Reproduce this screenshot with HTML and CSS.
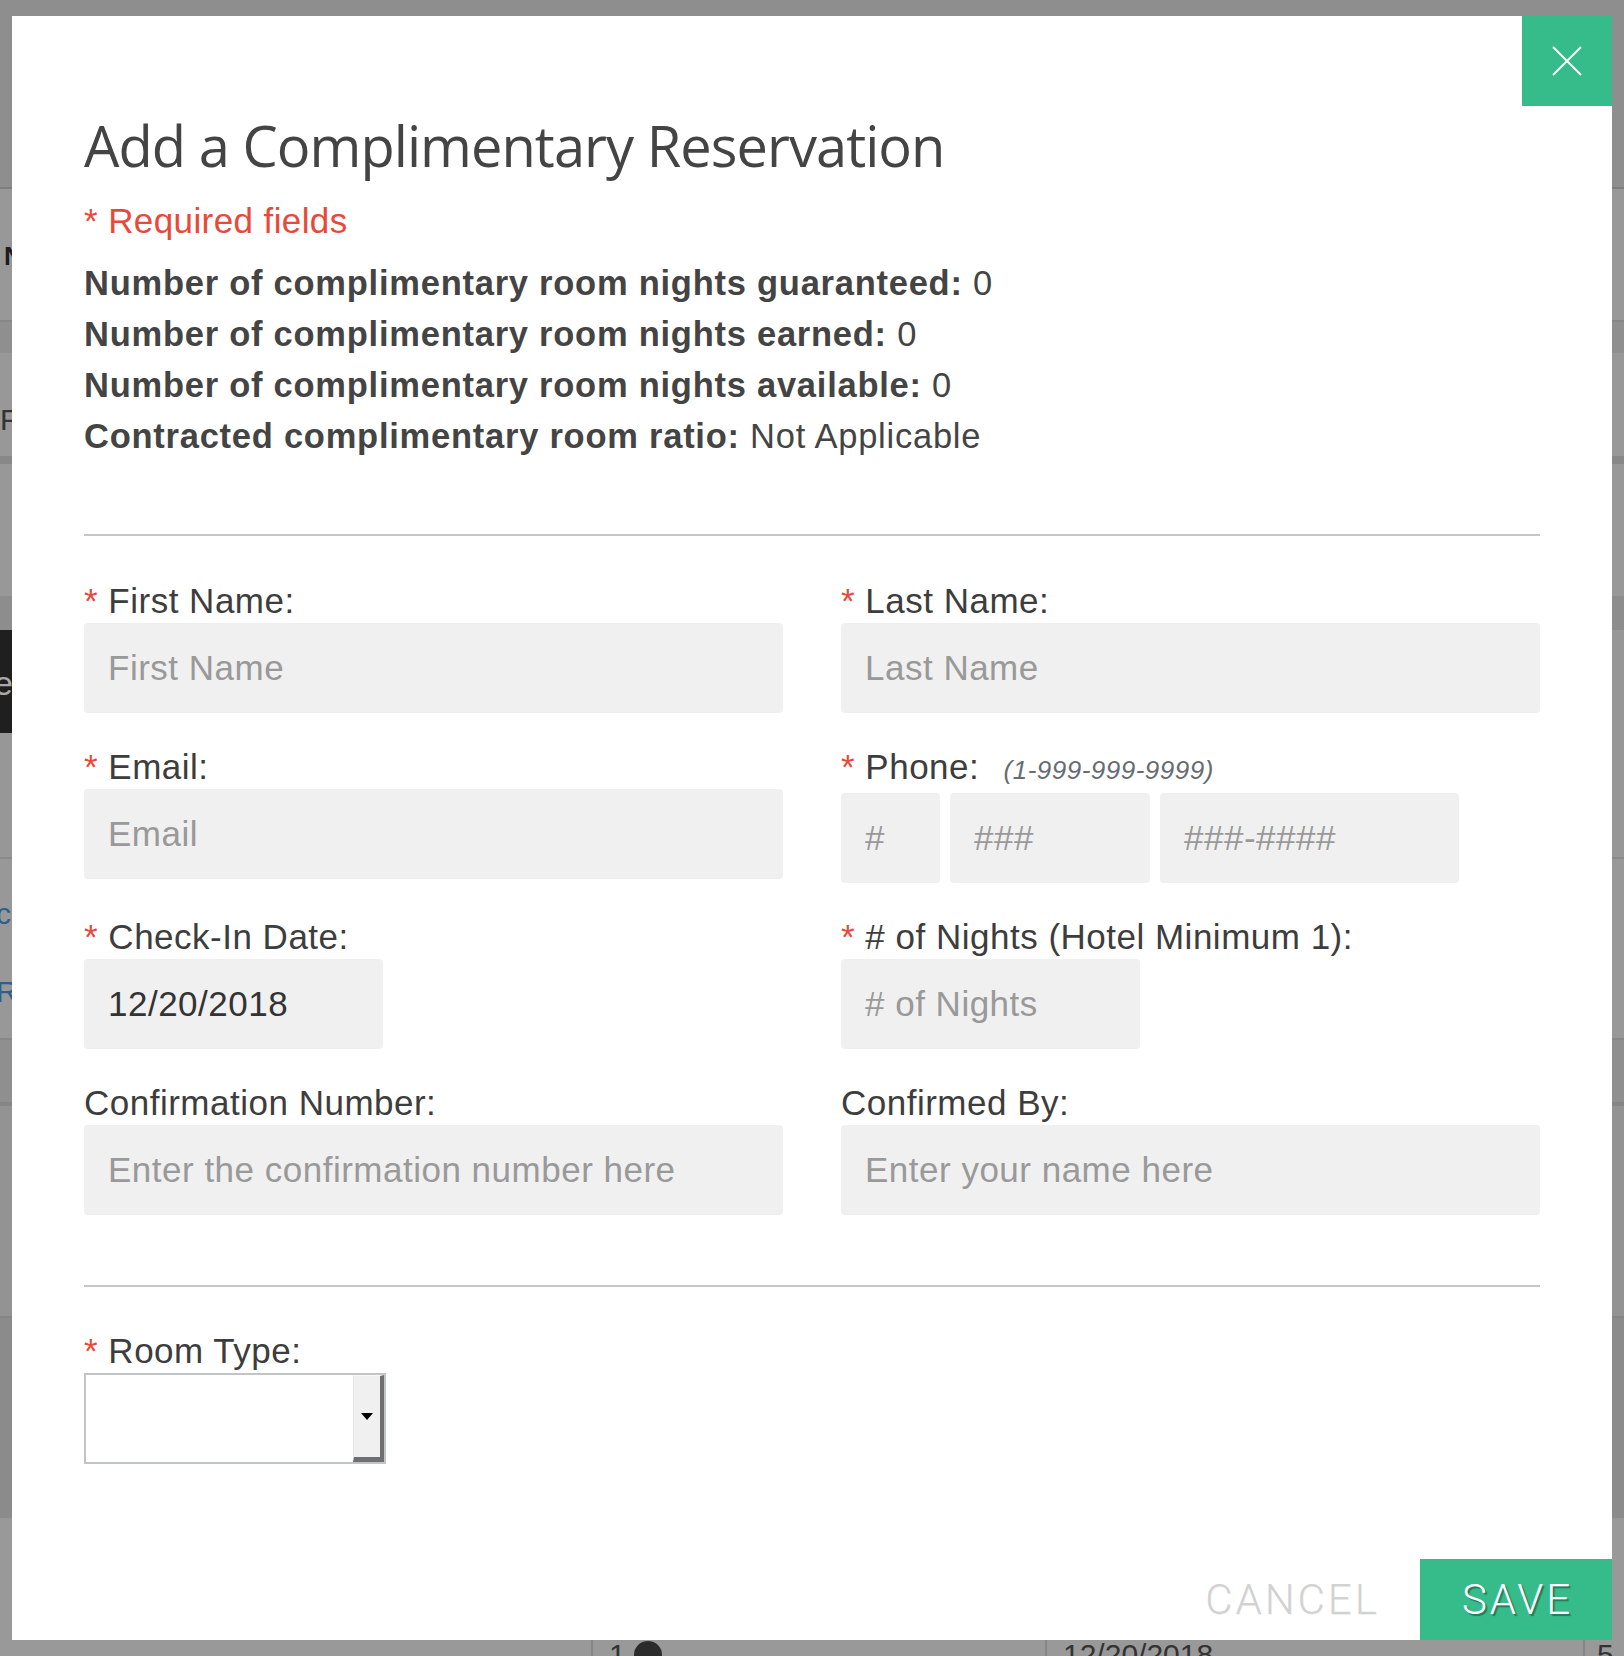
FILE: index.html
```html
<!DOCTYPE html>
<html lang="en">
<head>
  <meta charset="UTF-8">
  <meta name="viewport" content="width=device-width, initial-scale=1.0">
  <title>Add a Complimentary Reservation</title>
  <link rel="stylesheet" href="styles.css">
</head>
<body>
  <div class="backdrop">
    <div class="bk bk-head"></div>
    <div class="bk bk-r1"><span class="bk-bold">N</span></div>
    <div class="bk bk-r2"></div>
    <div class="bk bk-r3"><span class="bk-text">P</span></div>
    <div class="bk bk-r4"></div>
    <div class="bk bk-r5"></div>
    <div class="bk bk-r6"></div>
    <div class="bk bk-r7"><div class="bk-dark"><span class="bk-light">e</span></div></div>
    <div class="bk bk-r8"></div>
    <div class="bk bk-r9">
      <div class="bk-link">c</div>
      <div class="bk-link">R</div>
    </div>
    <div class="bk bk-r10"></div>
    <div class="bk bk-r11"></div>
    <div class="bk bk-r12"></div>
    <div class="bk bk-r13">
      <div class="bk-table">
        <div class="bk-cell bk-c1"></div>
        <div class="bk-cell bk-c2">1 <span class="bk-lock"></span></div>
        <div class="bk-cell bk-c3">12/20/2018</div>
        <div class="bk-cell bk-c4">5</div>
      </div>
    </div>
  </div>

  <div class="modal">
    <button class="close" aria-label="Close">
      <svg width="30" height="30" viewBox="0 0 30 30">
        <path d="M1 1 L29 29 M29 1 L1 29" stroke="#fff" stroke-width="1.8" fill="none"/>
      </svg>
    </button>

    <div class="modal-body">
      <h1 class="title">Add a Complimentary Reservation</h1>
      <p class="required"><span class="star">*</span> Required fields</p>

      <div class="stats">
        <div><b>Number of complimentary room nights guaranteed:</b> 0</div>
        <div><b>Number of complimentary room nights earned:</b> 0</div>
        <div><b>Number of complimentary room nights available:</b> 0</div>
        <div><b>Contracted complimentary room ratio:</b> Not Applicable</div>
      </div>

      <hr class="divider divider-top">

      <div class="form-grid">
        <div class="field">
          <label class="label"><span class="star">*</span> First Name:</label>
          <input class="input" type="text" placeholder="First Name">
        </div>
        <div class="field">
          <label class="label"><span class="star">*</span> Last Name:</label>
          <input class="input" type="text" placeholder="Last Name">
        </div>
        <div class="field">
          <label class="label"><span class="star">*</span> Email:</label>
          <input class="input" type="text" placeholder="Email">
        </div>
        <div class="field">
          <label class="label"><span class="star">*</span> Phone: <span class="hint">(1-999-999-9999)</span></label>
          <div class="phone-row">
            <input class="input phone-1" type="text" placeholder="#">
            <input class="input phone-2" type="text" placeholder="###">
            <input class="input phone-3" type="text" placeholder="###-####">
          </div>
        </div>
        <div class="field">
          <label class="label"><span class="star">*</span> Check-In Date:</label>
          <input class="input short filled" type="text" value="12/20/2018">
        </div>
        <div class="field">
          <label class="label"><span class="star">*</span> # of Nights (Hotel Minimum 1):</label>
          <input class="input short" type="text" placeholder="# of Nights">
        </div>
        <div class="field">
          <label class="label">Confirmation Number:</label>
          <input class="input" type="text" placeholder="Enter the confirmation number here">
        </div>
        <div class="field">
          <label class="label">Confirmed By:</label>
          <input class="input" type="text" placeholder="Enter your name here">
        </div>
      </div>

      <hr class="divider divider-bottom">

      <div class="field room-field">
        <label class="label"><span class="star">*</span> Room Type:</label>
        <div class="select">
          <span class="select-btn"><span class="caret"></span></span>
        </div>
      </div>
    </div>

    <div class="modal-footer">
      <button class="cancel">CANCEL</button>
      <button class="save">SAVE</button>
    </div>
  </div>
</body>
</html>
```

FILE: styles.css
```css
body{
  margin: 0;
  background-color: #8f8f8f;
  font-family: "Liberation Sans", Arial, Helvetica, sans-serif;
  color: #3d3d3d;
}

/* page behind the overlay */
.backdrop{
  position: fixed;
  top: 0;
  left: 0;
  right: 0;
  bottom: 0;
  overflow: hidden;
}
.bk{
  box-sizing: border-box;
  overflow: hidden;
}
.bk-head{
  height: 189px;
  background-color: #8e8e8e;
  border-bottom: 2px solid #7e7e7e;
}
.bk-r1{
  height: 133px;
  padding: 52px 0 0 4px;
  background-color: #989898;
  border-bottom: 2px solid #878787;
}
.bk-r2{
  height: 31px;
  background-color: #8f8f8f;
}
.bk-r3{
  height: 103px;
  padding: 52px 0 0 0;
  background-color: #989898;
}
.bk-r4{
  height: 8px;
  background-color: #888;
}
.bk-r5{
  height: 132px;
  background-color: #989898;
}
.bk-r6{
  height: 34px;
  background-color: #8d8d8d;
}
.bk-r7{
  height: 103px;
  background-color: #979797;
}
.bk-dark{
  width: 420px;
  height: 100%;
  padding-top: 34px;
  box-sizing: border-box;
  background-color: #1f1f1f;
}
.bk-r8{
  height: 126px;
  background-color: #979797;
  border-bottom: 2px solid #8a8a8a;
}
.bk-r9{
  height: 179px;
  padding: 16px 0 0 0;
  background-color: #989898;
}
.bk-r10{
  height: 68px;
  background-color: #8f8f8f;
  border-top: 2px solid #888;
  border-bottom: 4px solid #858585;
}
.bk-r11{
  height: 212px;
  background-color: #939393;
  border-bottom: 2px solid #858585;
}
.bk-r12{
  height: 200px;
  background-color: #8b8b8b;
}
.bk-r13{
  height: 200px;
  padding-top: 82px;
  background-color: #999;
}
.bk-bold{
  font-size: 26px;
  font-weight: bold;
  color: #1c1c1c;
}
.bk-text{
  font-size: 30px;
  line-height: 30px;
  color: #333;
}
.bk-light{
  display: inline-block;
  margin-left: -6px;
  font-size: 34px;
  color: #a9a9a9;
}
.bk-link{
  margin-left: -4px;
  font-size: 30px;
  line-height: 78px;
  color: #2f5f8e;
}
.bk-table{
  display: flex;
  height: 80px;
  font-size: 30px;
  color: #333;
}
.bk-cell{
  box-sizing: border-box;
  padding: 38px 0 0 16px;
  border-left: 2px solid #858585;
}
.bk-c1{
  width: 591px;
  border-left: none;
}
.bk-c2{
  width: 454px;
}
.bk-c3{
  width: 538px;
}
.bk-c4{
  flex: 1;
  padding-left: 12px;
}
.bk-lock{
  display: inline-block;
  width: 28px;
  height: 28px;
  border-radius: 50%;
  background-color: #2b2b2b;
  vertical-align: -4px;
}

/* modal */
.modal{
  position: relative;
  z-index: 1;
  margin: 16px 12px 0;
  background-color: #fff;
}
.close{
  position: absolute;
  top: 0;
  right: 0;
  width: 90px;
  height: 90px;
  padding: 0;
  border: none;
  background-color: #36bc8b;
  display: flex;
  align-items: center;
  justify-content: center;
  cursor: pointer;
}
.modal-body{
  padding: 95px 72px 0;
}
.title{
  margin: 0;
  font-family: "Open Sans", sans-serif;
  font-size: 56px;
  line-height: 68px;
  font-weight: normal;
  letter-spacing: -0.95px;
  color: #444;
}
.required{
  margin: 22px 0 0;
  font-size: 35px;
  line-height: 40px;
  letter-spacing: 0.4px;
  color: #e8493a;
}
.star{
  color: #e8493a;
}
.stats{
  margin-top: 17px;
  font-size: 34.5px;
  line-height: 51px;
  letter-spacing: 0.75px;
  color: #444;
}
.divider{
  margin: 0;
  height: 2px;
  border: none;
  background-color: #c6c6c6;
}
.divider-top{
  margin-top: 72px;
}
.divider-bottom{
  margin-top: 70px;
}

/* form */
.form-grid{
  display: grid;
  grid-template-columns: 1fr 1fr;
  column-gap: 58px;
  row-gap: 34px;
  margin-top: 45px;
}
.field{
  display: flex;
  flex-direction: column;
  align-items: flex-start;
}
.label{
  margin-bottom: 2px;
  font-size: 35px;
  line-height: 40px;
  letter-spacing: 0.5px;
  color: #3d3d3d;
}
.hint{
  margin-left: 14px;
  font-size: 26px;
  line-height: 1;
  font-style: italic;
  letter-spacing: 0.5px;
  color: #686c72;
}
.input{
  box-sizing: border-box;
  width: 100%;
  height: 90px;
  padding: 0 24px;
  border: none;
  border-radius: 4px;
  background-color: #f0f0f0;
  font-family: "Liberation Sans", Arial, Helvetica, sans-serif;
  font-size: 35px;
  letter-spacing: 0.5px;
  color: #333;
  outline: none;
}
.input::placeholder{
  color: #999;
}
.short{
  width: 299px;
}
.phone-row{
  display: flex;
  gap: 10px;
  margin-top: 4px;
}
.phone-1{
  width: 99px;
}
.phone-2{
  width: 200px;
}
.phone-3{
  width: 299px;
}
.room-field{
  margin-top: 44px;
}
.select{
  box-sizing: border-box;
  width: 302px;
  height: 91px;
  border: 2px solid #c2c5c8;
  background-color: #fff;
  display: flex;
  justify-content: flex-end;
}
.select-btn{
  box-sizing: border-box;
  width: 31px;
  background-color: #f0f0f0;
  border-top: 1px solid #fafafa;
  border-left: 1px solid #e6e6e6;
  border-right: 4px solid #6f6f6f;
  border-bottom: 5px solid #6f6f6f;
  display: flex;
  align-items: center;
  justify-content: center;
}
.caret{
  width: 0;
  height: 0;
  border-left: 6px solid transparent;
  border-right: 6px solid transparent;
  border-top: 7px solid #000;
}

/* footer buttons */
.modal-footer{
  display: flex;
  justify-content: flex-end;
  gap: 33px;
  margin-top: 95px;
}
.cancel,
.save{
  height: 81px;
  padding: 0 0 0 3px;
  border: none;
  font-family: Roboto, "Liberation Sans", sans-serif;
  font-size: 42px;
  font-weight: 300;
  letter-spacing: 3px;
  cursor: pointer;
}
.cancel{
  width: 192px;
  background: none;
  color: #d2d2d2;
  text-shadow: 1px 1px 0 rgba(0, 0, 0, 0.06);
}
.save{
  width: 192px;
  background-color: #36bc8b;
  color: #fff;
  text-shadow: 2px 2px 1px rgba(0, 0, 0, 0.35);
}
```
